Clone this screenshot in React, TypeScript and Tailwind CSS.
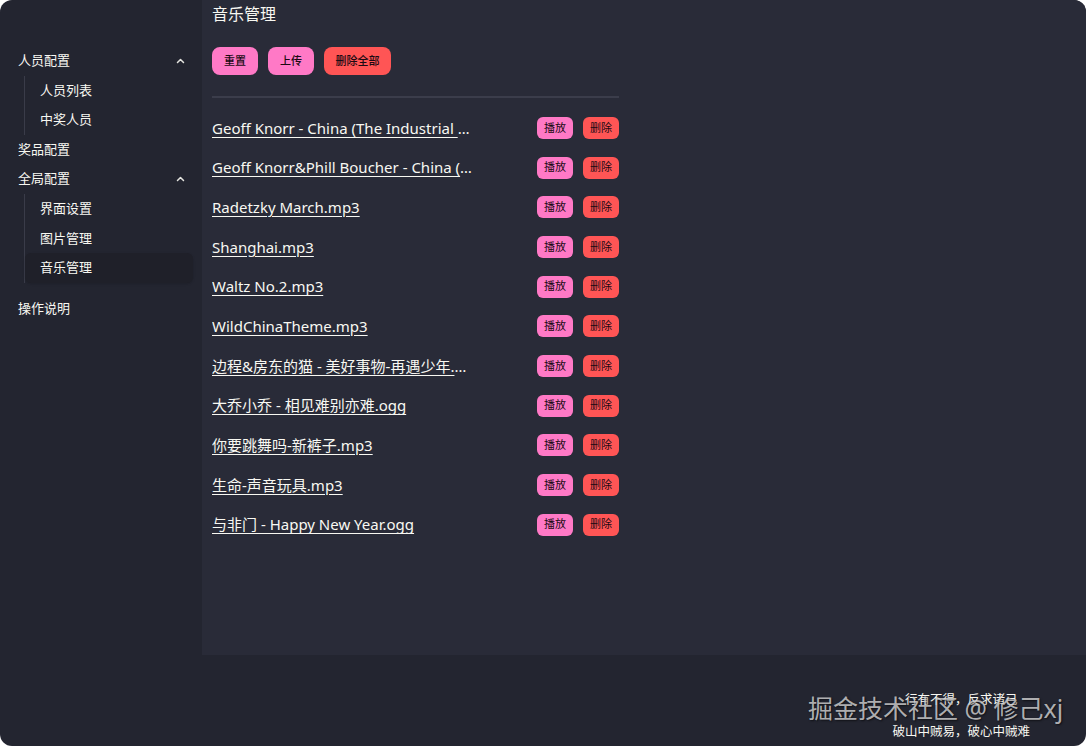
import React from 'react';

const songs = [
    'Geoff Knorr - China (The Industrial Era).mp3',
    'Geoff Knorr&Phill Boucher - China (Atomic Era).mp3',
    'Radetzky March.mp3',
    'Shanghai.mp3',
    'Waltz No.2.mp3',
    'WildChinaTheme.mp3',
    '边程&房东的猫 - 美好事物-再遇少年.mp3',
    '大乔小乔 - 相见难别亦难.ogg',
    '你要跳舞吗-新裤子.mp3',
    '生命-声音玩具.mp3',
    '与非门 - Happy New Year.ogg',
];

const Chevron = () => (
    <svg width="9" height="6" viewBox="0 0 9 6" fill="none" className="mr-[8px]">
        <path d="M1.5 4.5 L4.5 1.5 L7.5 4.5" stroke="#e5e5e0" strokeWidth="1.5" strokeLinecap="round" strokeLinejoin="round" />
    </svg>
);

const SubItem: React.FC<{ label: string; active?: boolean }> = ({ label, active }) => (
    <div className={`h-[29.6px] flex items-center pl-[15px] rounded-md ${active ? 'bg-[#1f2029] shadow-sm' : ''}`}>
        {label}
    </div>
);

const App: React.FC = () => {
    return (
        <div className="w-[1086px] h-[746px] bg-white">
            <div
                className="relative w-full h-full rounded-[12px] overflow-hidden bg-[#232530] text-[#f8f8f2] flex flex-col"
                style={{ fontFamily: '"Noto Sans", "Noto Sans CJK SC", sans-serif' }}
            >
                <div className="flex h-[655px]">
                    {/* Sidebar */}
                    <aside className="w-[202px] shrink-0 pt-[46px] pr-[9px] text-[13px]">
                        <div className="h-[29.6px] flex items-center justify-between pl-[18px]">
                            <span>人员配置</span>
                            <Chevron />
                        </div>
                        <div className="ml-[24px] border-l border-[#3a3c49]">
                            <SubItem label="人员列表" />
                            <SubItem label="中奖人员" />
                        </div>
                        <div className="h-[29.6px] flex items-center pl-[18px]">奖品配置</div>
                        <div className="h-[29.6px] flex items-center justify-between pl-[18px]">
                            <span>全局配置</span>
                            <Chevron />
                        </div>
                        <div className="ml-[24px] border-l border-[#3a3c49]">
                            <SubItem label="界面设置" />
                            <SubItem label="图片管理" />
                            <SubItem label="音乐管理" active />
                        </div>
                        <div className="h-[29.6px] mt-[11px] flex items-center pl-[18px]">操作说明</div>
                    </aside>

                    {/* Main */}
                    <main className="flex-1 bg-[#292b38] pl-[10px] pt-[2px]">
                        <h1 className="text-[16px] leading-[24px]">音乐管理</h1>
                        <div className="flex gap-[10px] mt-[21px] text-[11px] text-[#1a0a12] font-medium">
                            <button className="h-[28px] px-[12px] rounded-lg bg-[#ff79c6]">重置</button>
                            <button className="h-[28px] px-[12px] rounded-lg bg-[#ff79c6]">上传</button>
                            <button className="h-[28px] px-[11.5px] rounded-lg bg-[#ff5555]">删除全部</button>
                        </div>
                        <div className="w-[407px] h-[2px] bg-[#3b3d4b] mt-[21px]" />
                        <ul className="w-[407px] mt-[10px]">
                            {songs.map((s) => (
                                <li key={s} className="h-[39.7px] flex items-center justify-between">
                                    <span className="w-[260px] truncate underline underline-offset-[3px] text-[15px]">{s}</span>
                                    <div className="flex gap-[10px] text-[11px] text-[#1a0a12]">
                                        <button className="h-[22px] px-[7px] rounded-md bg-[#ff79c6]">播放</button>
                                        <button className="h-[22px] px-[7px] rounded-md bg-[#ff5555]">删除</button>
                                    </div>
                                </li>
                            ))}
                        </ul>
                    </main>
                </div>

                {/* Footer */}
                <footer className="flex-1 flex justify-end pr-[56px]">
                    <div className="flex flex-col items-center pt-[36px] gap-[14px] text-[12.5px] leading-[18px]">
                        <span>行有不得，反求诸己</span>
                        <span>破山中贼易，破心中贼难</span>
                    </div>
                </footer>

                {/* Watermark */}
                <div className="absolute left-[808px] top-[691px] text-[25px] leading-[34px] text-[#d8d8d8]/80 whitespace-nowrap [text-shadow:1px_1px_2px_rgba(0,0,0,0.6)]">
                    掘金技术社区 @ 修己xj
                </div>
            </div>
        </div>
    );
};

export default App;
